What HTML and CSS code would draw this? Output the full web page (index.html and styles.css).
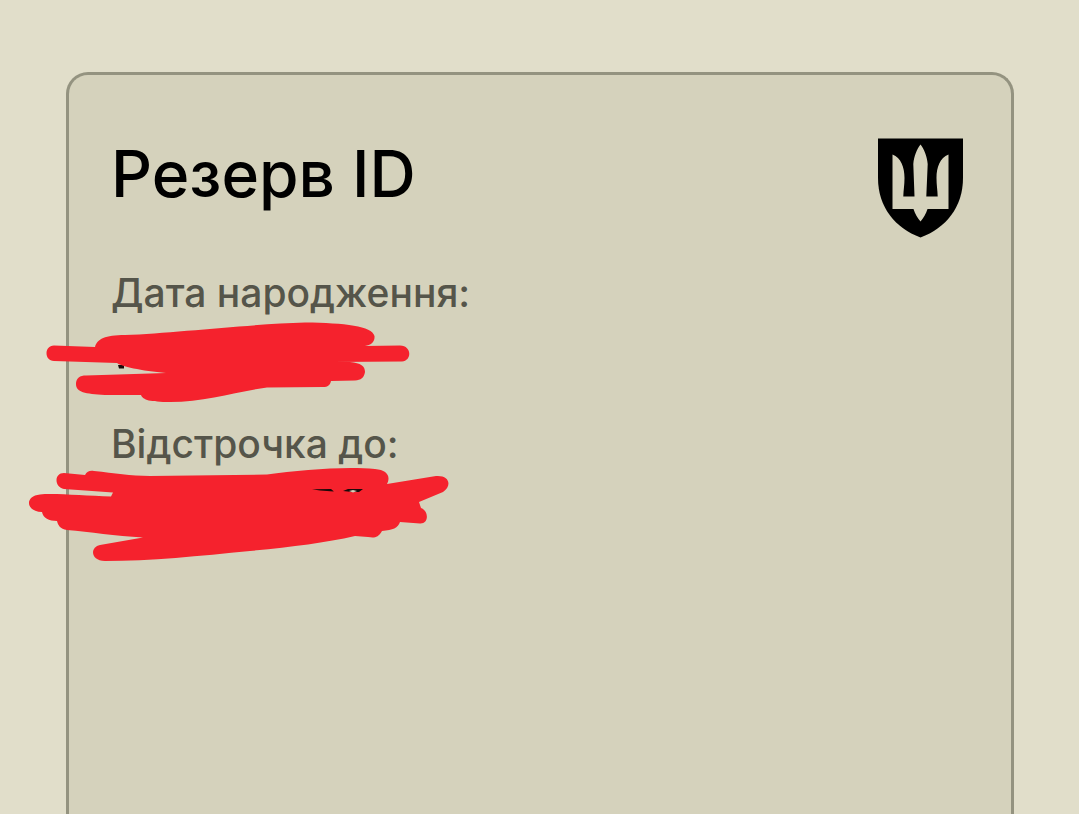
FILE: index.html
```html
<!DOCTYPE html>
<html lang="uk">
  <head>
    <meta charset="UTF-8" />
    <meta name="viewport" content="width=device-width, initial-scale=1.0" />
    <title>Резерв ID</title>
    <link rel="stylesheet" href="styles.css">
  </head>
  <body>
    <main class="card">
      <header class="card-header">
        <h1>Резерв ID</h1>
        <svg class="emblem" viewBox="878 138 85 100" aria-hidden="true">
          <path d="M878 138.500H963V178C963 207 946 228 920.500 237.500C895 228 878 207 878 178Z" />
          <path class="trident" d="M892.500 154.500C901 158 904.500 167 904.500 178C904.500 185 903.500 190 903.300 196.500H914.500L913.300 164C914 156 917 149 920.500 144.500C924 149 927 156 927.700 164L926.300 196.500H937.700C937.500 190 936.500 185 936.500 178C936.500 167 940 158 948.500 154.500V209H927.500C926 214 923.500 218 920.500 221.500C917.500 218 915 214 913.500 209H892.500Z" />
        </svg>
      </header>
      <dl class="details">
        <div class="field">
          <dt>Дата народження:</dt>
          <dd>
            <svg class="marker marker-birth" viewBox="40 318 380 90" aria-hidden="true">
              <path class="ink" d="M118 365H124V368.500H119Z" />
              <path d="M54 345.500L95 347C97 339 105 335 125 335C175 333 250 324 305 322.500C345 323 372 326 374.500 336C375 342 371 345 365 346L400 345.500C412 345.500 412 361 402 361.500L333 362H350C361 363 365 366 365 372C364 378 361 380 355 380.500L331 381C330 385 328 387 323 387L267 387.500C235 392 205 402 170 402C150 402 143 400 141 395H105C85 394 76 392 76 384C76 378 80 375.500 86 375.500L166 373C142 371 120 366 117 363L54 361C44 361 44 345.500 54 345.500Z" />
            </svg>
          </dd>
        </div>
        <div class="field">
          <dt>Відстрочка до:</dt>
          <dd>
            <svg class="marker marker-delay" viewBox="20 464 440 102" aria-hidden="true">
              <path d="M64 473L85 475C87 471 90 470.500 94 471C115 473 130 476 150 476L267 474.500C300 470 345 466 375 469C387 470 391 476 387 484L436 476C450 475 452 486 443 492L419 502L421 508C429 511 429 524 420 523.500L400 522C398 528 393 530 382 531C378 538 374 538 368 537L355 536C325 543 290 547 250 551C200 556 150 561 105 561C90 561 90 547 100 545L143 537.500C115 536 90 532 67 530C60 529 58 525 57 521C49 521 43 518 42 512C26 512 24 496 40 494.500C55 493 85 496 111 496.500L113 492.500L64 489C54 487 54 473 64 473Z" />
              <path class="ink" d="M312 489.300L331 489L334 491.500L320 490.500ZM343 491L348 489H363L359 492H352Z" />
              <path class="gap" d="M349 491L353 490L357 491L353 492.500Z" />
            </svg>
          </dd>
        </div>
      </dl>
    </main>
  </body>
</html>
```
FILE: styles.css
```css
* {
  box-sizing: border-box;
}

body {
  margin: 0;
  min-height: 100vh;
  padding: 72px 65px 0 66px;
  display: flex;
  background-color: #e1deca;
  font-family: Inter, "Liberation Sans", sans-serif;
}

.card {
  flex: 1;
  padding: 63px 48px 40px 42px;
  border: 3px solid #949380;
  border-bottom: none;
  border-radius: 22px 22px 0 0;
  background-color: #d5d2bc;
}

.card-header {
  display: flex;
  justify-content: space-between;
  align-items: flex-start;
}

h1 {
  margin: 0;
  font-size: 64px;
  font-weight: 500;
  line-height: 72px;
  color: #000;
}

.emblem {
  width: 85px;
  height: 100px;
}

.trident {
  fill: #d5d2bc;
}

.details {
  margin: 31px 0 0;
  display: flex;
  flex-direction: column;
  gap: 48px;
}

.field dt {
  font-size: 39px;
  font-weight: 500;
  line-height: 48px;
  color: #55554a;
}

/* value is covered by the marker */
.field dd {
  position: relative;
  margin: 7px 0 0;
  height: 48px;
}

.marker {
  position: absolute;
  fill: #f5222d;
}

.marker-birth {
  top: -6px;
  left: -71px;
  width: 380px;
  height: 90px;
}

.marker-delay {
  top: -11px;
  left: -91px;
  width: 440px;
  height: 102px;
}

.ink {
  fill: #1a0a0a;
}

.gap {
  fill: #d5d2bc;
}
```
